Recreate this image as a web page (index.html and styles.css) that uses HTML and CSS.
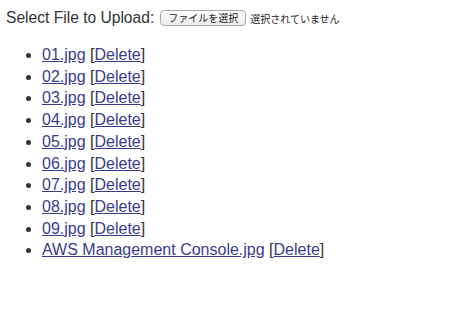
FILE: index.html
```html
<!DOCTYPE html>
<html lang="ja">
<head>
    <meta charset="UTF-8">
    <title>File Upload</title>
    <link rel="stylesheet" href="styles.css">
</head>
<body>
    <form class="upload-form">
        <label for="file">Select File to Upload:</label>
        <span class="file-input">
            <button type="button" class="file-button">ファイルを選択</button>
            <span class="file-status">選択されていません</span>
        </span>
    </form>

    <ul class="file-list">
        <li><a href="#">01.jpg</a> [<a href="#">Delete</a>]</li>
        <li><a href="#">02.jpg</a> [<a href="#">Delete</a>]</li>
        <li><a href="#">03.jpg</a> [<a href="#">Delete</a>]</li>
        <li><a href="#">04.jpg</a> [<a href="#">Delete</a>]</li>
        <li><a href="#">05.jpg</a> [<a href="#">Delete</a>]</li>
        <li><a href="#">06.jpg</a> [<a href="#">Delete</a>]</li>
        <li><a href="#">07.jpg</a> [<a href="#">Delete</a>]</li>
        <li><a href="#">08.jpg</a> [<a href="#">Delete</a>]</li>
        <li><a href="#">09.jpg</a> [<a href="#">Delete</a>]</li>
        <li><a href="#">AWS Management Console.jpg</a> [<a href="#">Delete</a>]</li>
    </ul>
</body>
</html>
```

FILE: styles.css
```css
body {
    margin: 0;
    padding: 8px 6px;
    font-family: "Liberation Sans", "Noto Sans CJK JP", sans-serif;
    font-size: 15.6px;
    color: #333;
    background-color: white;
}
.upload-form {
    display: flex;
    align-items: center;
    height: 20px;
}
.file-input {
    display: flex;
    align-items: center;
    margin-left: 6px;
}
.file-button {
    font-family: "Noto Sans CJK JP", sans-serif;
    font-size: 10px;
    line-height: 12px;
    height: 16px;
    padding: 0 7px;
    color: #222;
    background: linear-gradient(#fdfdfd, #ececec);
    border: 1px solid #a9a9a9;
    border-radius: 4px;
}
.file-status {
    font-family: "Noto Sans CJK JP", sans-serif;
    font-size: 10px;
    margin-left: 4px;
    color: #222;
}
.file-list {
    margin: 16px 0 0;
    padding-left: 36px;
    font-size: 16px;
    line-height: 21.7px;
}
.file-list a {
    color: #3b3b8c;
}
```
